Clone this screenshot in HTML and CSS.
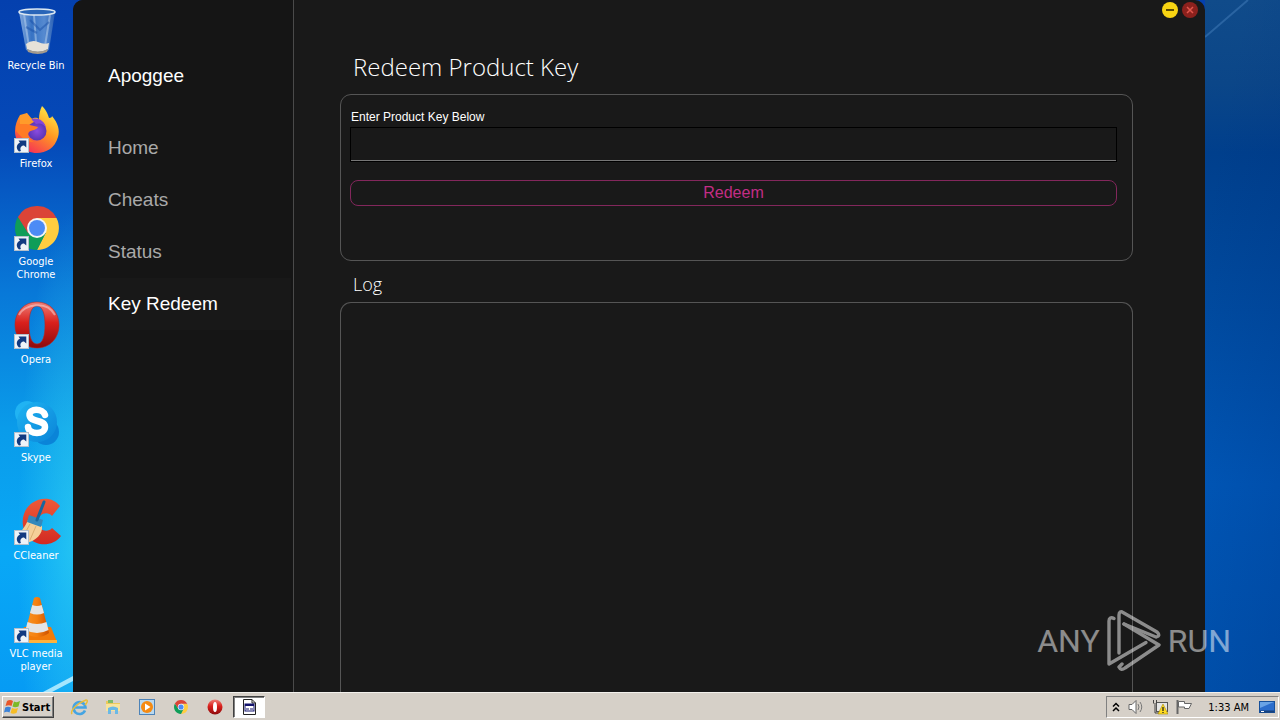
FILE: index.html
```html
<!DOCTYPE html>
<html lang="en">
<head>
<meta charset="utf-8">
<title>Apoggee</title>
<link rel="stylesheet" href="styles.css">
</head>
<body>
<svg class="defs" aria-hidden="true">
  <defs>
    <linearGradient id="glass" x1="0" x2="1"><stop offset="0" stop-color="#b8d4f0"/><stop offset=".35" stop-color="#4d88cc"/><stop offset=".7" stop-color="#79a9de"/><stop offset="1" stop-color="#3a6cb5"/></linearGradient>
    <linearGradient id="fox" x1=".8" y1="0" x2=".2" y2="1"><stop offset="0" stop-color="#fff04a"/><stop offset=".45" stop-color="#ff9a22"/><stop offset="1" stop-color="#f5245c"/></linearGradient>
    <radialGradient id="globe"><stop offset="0" stop-color="#8a4be0"/><stop offset="1" stop-color="#5a35b5"/></radialGradient>
    <linearGradient id="opera" x1="0" y1="0" x2="0" y2="1"><stop offset="0" stop-color="#ef8078"/><stop offset=".45" stop-color="#d9201c"/><stop offset="1" stop-color="#8c0a0c"/></linearGradient>
    <linearGradient id="skype" x1="0" y1="0" x2="1" y2="1"><stop offset="0" stop-color="#1fb4f2"/><stop offset="1" stop-color="#0a84d8"/></linearGradient>
    <linearGradient id="cc" x1="0" y1="0" x2="0" y2="1"><stop offset="0" stop-color="#ee5a38"/><stop offset="1" stop-color="#d22a22"/></linearGradient>
    <linearGradient id="cone" x1="0" x2="1"><stop offset="0" stop-color="#f79326"/><stop offset=".5" stop-color="#f5800f"/><stop offset="1" stop-color="#cc5200"/></linearGradient>
    <symbol id="arrow" viewBox="0 0 15 15"><rect x=".5" y=".5" width="14" height="14" fill="#eef3f8" stroke="#b4c0cc"/><path d="M5 13.500C1.500 10.500 2.500 6 6 4.800L4.500 2.500H12.300V9.500L10 7.500C7 7.500 5.500 10 7 13Z" fill="#123a80"/></symbol>
    <symbol id="chrome" viewBox="0 0 44 44"><path d="M22 12H41.500A22 22 0 0 1 22 44L30.500 27Z" fill="#ffcd40"/><path d="M2.950 11A22 22 0 0 0 22 44L30.700 27 13.300 27Z" fill="#0f9d58"/><path d="M2.950 11A22 22 0 0 1 41.500 12H22L13 27Z" fill="#db4437"/><circle cx="22" cy="22" r="10" fill="#f4f4f4"/><circle cx="22" cy="22" r="8" fill="#4c8bf5"/></symbol>
  </defs>
</svg>

<div class="desktop">
  <nav class="shortcuts" aria-label="Desktop">
    <a class="shortcut" href="#">
      <svg class="shortcut-icon" viewBox="0 0 48 48"><path d="M7 4 43 4 37 42Q27 48 14 42Z" fill="url(#glass)" fill-opacity=".7"/><path d="M12 6 17 39M22 7 24 34M38 7 33 38" stroke="#c9def2" stroke-opacity=".45" stroke-width="2"/><path d="M18 12 28 22 37 14M14 19 25 25" stroke="#1a50a8" stroke-opacity=".5" stroke-width="2" fill="none"/><path d="M14 36Q20 31 26 34T37 35L36 41Q26 47 15 41Z" fill="#e7e2d8"/><path d="M15 41Q26 46 36 41L35 44Q26 48 16 44Z" fill="#a39a8d"/><ellipse cx="25" cy="4" rx="18" ry="3" fill="#2965b8" stroke="#dce8f2" stroke-width="1.500"/></svg>
      <span>Recycle Bin</span>
    </a>
    <a class="shortcut" href="#">
      <svg class="shortcut-icon" viewBox="0 0 48 48"><path d="M30 0C35 5 36 9 37 12 39 12 40 11 40 10 46 17 48 24 46 31 43 42 34 47 25 47 12 47 3 37 3 25 3 19 5 14 8 9L9 14C11 11 13 9 15 7 15 10 17 12 20 13 23 11 25 12 27 13 27 8 28 4 30 0Z" fill="url(#fox)"/><circle cx="25" cy="25" r="9.500" fill="url(#globe)"/><path d="M19 13C25 11 33 14 34 22 31 17 27 17 24 18Z" fill="#8446d8"/><path d="M4 19C10 16 14 18 18 19L26 21C25 24 20 24 17 26 15 29 17 34 22 36 12 36 7 28 4 25Z" fill="#ff7b25"/><path d="M8 9 15 7 20 13 18 18 8 18Z" fill="#ff9b2a"/></svg>
      <svg class="shortcut-arrow"><use href="#arrow"/></svg>
      <span>Firefox</span>
    </a>
    <a class="shortcut" href="#">
      <svg class="shortcut-icon" viewBox="0 0 48 48"><use href="#chrome" x="3" y="2" width="44" height="44"/></svg>
      <svg class="shortcut-arrow"><use href="#arrow"/></svg>
      <span>Google Chrome</span>
    </a>
    <a class="shortcut" href="#">
      <svg class="shortcut-icon" viewBox="0 0 48 48"><path fill-rule="evenodd" d="M25 0C38 0 47 10 47 23S38 46 25 46 3 36 3 23 12 0 25 0ZM25 4C19 4 17 13 17 23S19 42 25 42 33 33 33 23 31 4 25 4Z" fill="url(#opera)" stroke="#b12825" stroke-width=".6"/><path d="M7 13C12 2 35-2 43 13" fill="none" stroke="#fff" stroke-opacity=".4" stroke-width="2"/></svg>
      <svg class="shortcut-arrow"><use href="#arrow"/></svg>
      <span>Opera</span>
    </a>
    <a class="shortcut" href="#">
      <svg class="shortcut-icon" viewBox="0 0 48 48"><circle cx="15" cy="13" r="12" fill="#20b3f3"/><circle cx="34" cy="32" r="13" fill="#0a84d8"/><circle cx="25" cy="22" r="20" fill="url(#skype)"/><path d="M33 15C31 8 17 8 17.500 15 18 23 33 19 33 27 33 35 17 35 16 27" fill="none" stroke="#fff" stroke-width="6.500" stroke-linecap="round"/></svg>
      <svg class="shortcut-arrow"><use href="#arrow"/></svg>
      <span>Skype</span>
    </a>
    <a class="shortcut" href="#">
      <svg class="shortcut-icon" viewBox="0 0 48 48"><path d="M48 8 40 18C36 13 26 15 26 24S36 35 40 30L49 38C41 49 25 48 18 41 7 30 9 13 20 5 30-2 42 0 48 8Z" fill="url(#cc)"/><path d="M16 22 30 28C31 36 24 43 14 45L2 38C9 35 13 29 16 22Z" fill="#f5cf98"/><path d="M18 26 11 39M24 28 18 42" stroke="#dcae70" stroke-width="1"/><path d="M17 17 31 22 29 29 15 24Z" fill="#3488bc"/><path d="M25 22 32 4" stroke="#17669d" stroke-width="3" stroke-linecap="round"/></svg>
      <svg class="shortcut-arrow"><use href="#arrow"/></svg>
      <span>CCleaner</span>
    </a>
    <a class="shortcut" href="#">
      <svg class="shortcut-icon" viewBox="0 0 48 48"><path d="M12 31H39L45 46H7Z" fill="#f27b0a"/><path d="M7 44H45V47H7Z" fill="#ffb23c"/><path d="M22 2Q25 0 28 2L37 37Q26 45 13 37Z" fill="url(#cone)"/><path d="M20.300 9Q25 11 29.700 9L32 17Q25 20 18 17ZM15.500 26Q25 30 34.500 26L36.500 34Q25 40 13.500 34Z" fill="#e4e4e4"/></svg>
      <svg class="shortcut-arrow"><use href="#arrow"/></svg>
      <span>VLC media player</span>
    </a>
  </nav>

  <div class="window">
    <aside class="sidebar">
      <h1 class="brand">Apoggee</h1>
      <nav class="menu">
        <a class="menu-item" href="#">Home</a>
        <a class="menu-item" href="#">Cheats</a>
        <a class="menu-item" href="#">Status</a>
        <a class="menu-item active" href="#">Key Redeem</a>
      </nav>
    </aside>
    <main class="content">
      <h2 class="title">Redeem Product Key</h2>
      <form class="panel redeem-form">
        <label class="field-label" for="key">Enter Product Key Below</label>
        <input class="key-input" id="key" type="text">
        <button class="redeem" type="button">Redeem</button>
      </form>
      <h3 class="log-title">Log</h3>
      <section class="panel log"></section>
    </main>
    <div class="window-controls">
      <button class="control minimize" type="button" aria-label="Minimize"><svg viewBox="0 0 16 16"><path d="M4 8H12" stroke="#5c4b00" stroke-width="2"/></svg></button>
      <button class="control close" type="button" aria-label="Close"><svg viewBox="0 0 16 16"><path d="M5 5 11 11M11 5 5 11" stroke="#e2564c" stroke-width="1.500"/></svg></button>
    </div>
  </div>
  <svg class="streak-right" viewBox="0 0 75 40"><path d="M0 37 43 0" stroke="#4b86c0" stroke-opacity=".45" stroke-width="2"/></svg>
  <svg class="streak-left" viewBox="0 0 30 16"><path d="M0 16 30 0V5L9 16Z" fill="#bdf0ff" fill-opacity=".85"/></svg>

  <div class="watermark">
    <span>ANY</span>
    <svg viewBox="0 0 54 62" fill="none" stroke="currentColor" stroke-width="3.400" stroke-linecap="round" stroke-linejoin="round"><path d="M7 8.500C4 7 2 8 2 11V54L39 32.500"/><path d="M12 43V5C12 2 14 1 16 2.500L50 22Q54 26 49 27L17 14"/><path d="M17 14 52 35 18 58Q14 61 12 57L15 54"/></svg>
    <span>RUN</span>
  </div>
</div>

<footer class="taskbar">
  <button class="start" type="button">
    <svg viewBox="0 0 17 16"><path d="M3 2Q6 0 9 2L7.500 7Q5 5.500 1.500 7Z" fill="#e8562a"/><path d="M10 2.500Q13 4 16 2L14.500 7.500Q11 9 8.500 7.500Z" fill="#7cb928"/><path d="M1.200 8.500Q4 7 7 8.500L5.500 13.500Q3 12 0 13.500Z" fill="#3c83d8"/><path d="M8 9Q11 10.500 14 9L12.500 14Q9 15.500 6.500 14Z" fill="#f7bd25"/></svg>
    Start
  </button>
  <div class="tasks">
    <button class="task" type="button" aria-label="Internet Explorer"><svg viewBox="0 0 18 18"><path d="M15 12.500A6 6 0 1 1 15.500 9.500H5" fill="none" stroke="#45a4e2" stroke-width="2.600"/><path d="M2 16C0 13 7 5 16 2 19 2 16 6 15 7" fill="none" stroke="#e9bd38" stroke-width="1.500"/></svg></button>
    <button class="task" type="button" aria-label="Explorer"><svg viewBox="0 0 18 18"><path d="M2 3H8L9 5H16V13H2Z" fill="#ecc95b"/><path d="M4 2H9V5H4Z" fill="#7dbb68"/><path d="M2 6H16V13H2Z" fill="#f8e49c"/><path d="M4 16V10Q9 7 14 10V16H11V12H7V16Z" fill="#6bb9e5"/></svg></button>
    <button class="task" type="button" aria-label="Media Player"><svg viewBox="0 0 18 18"><rect x="1.500" y="1.500" width="15" height="15" fill="#b9d8ef" stroke="#4d83b8"/><circle cx="9" cy="9" r="6" fill="#f58a12"/><path d="M7 5.500 12.500 9 7 12.500Z" fill="#fff"/></svg></button>
    <button class="task" type="button" aria-label="Chrome"><svg viewBox="0 0 18 18"><use href="#chrome" x="2" y="2" width="14" height="14"/></svg></button>
    <button class="task" type="button" aria-label="Opera"><svg viewBox="0 0 18 18"><circle cx="9" cy="9" r="7.500" fill="url(#opera)"/><ellipse cx="9" cy="9" rx="2" ry="5" fill="#fff"/></svg></button>
    <button class="task current" type="button" aria-label="Apoggee"><svg viewBox="0 0 18 18"><path d="M3.500 1.500H12L15.500 5V16.500H3.500Z" fill="#fff" stroke="#222"/><path d="M12 1.500V5H15.500" fill="none" stroke="#222"/><rect x="5" y="6" width="9" height="7" fill="#fff" stroke="#14146e"/><path d="M5 7H14" stroke="#14146e" stroke-width="2"/><path d="M7 10V12M11 10V12M8 11H9M12 11H13" stroke="#14146e"/></svg></button>
  </div>
  <div class="tray">
    <svg class="chevron" viewBox="0 0 8 10"><path d="M1 4.500 4 1.500 7 4.500M1 9 4 6 7 9" fill="none" stroke="#000" stroke-width="1.500"/></svg>
    <svg class="tray-icon" viewBox="0 0 16 16"><path d="M1 5.500H4L8 1.500V14.500L4 10.500H1Z" fill="#fff" stroke="#666"/><path d="M10 5Q12 8 10 11M12 3Q15.500 8 12 13" fill="none" stroke="#777"/></svg>
    <svg class="tray-icon" viewBox="0 0 16 16"><rect x="4.500" y="3.500" width="11" height="9" fill="#e5e5e5" stroke="#555"/><path d="M1.500 1V4Q3 7 4.500 4V1M3 6V14H8" fill="none" stroke="#444"/><path d="M11 5 16 15H6Z" fill="#ffdc22" stroke="#a88a00" stroke-width=".6"/><path d="M11 8V12M11 13V14" stroke="#222" stroke-width="1.300"/></svg>
    <svg class="tray-icon" viewBox="0 0 16 16"><path d="M1.500 1V15" stroke="#666" stroke-width="2"/><path d="M2.500 2.500H8.500V4.500H15.500L13 9.500H8.500V8H2.500Z" fill="#fff" stroke="#666"/></svg>
    <time class="clock">1:33 AM</time>
    <svg class="tray-icon" viewBox="0 0 16 16"><rect x=".5" y="2.500" width="15" height="11" fill="#2b6dcc" stroke="#16509b"/><path d="M1 3H15L1 9Z" fill="#69a3e6"/><path d="M1 12.500H15" stroke="#17417b" stroke-width="2"/><path d="M2 12.500H5" stroke="#fff"/></svg>
  </div>
</footer>
</body>
</html>
```

FILE: styles.css
```css
* {
  box-sizing: border-box;
}

body {
  margin: 0;
  height: 100vh;
  display: flex;
  flex-direction: column;
  overflow: hidden;
  font-family: "Liberation Sans", Arial, sans-serif;
}

button {
  font: inherit;
  padding: 0;
}

a {
  color: inherit;
  text-decoration: none;
}

.defs {
  position: absolute;
  width: 0;
  height: 0;
}

/* Desktop */
.desktop {
  position: relative;
  flex: 1;
  min-height: 0;
  display: flex;
  padding-right: 75px;
  background:
    linear-gradient(100deg, transparent 20%, rgba(0, 40, 120, 0.25)) right / 75px 100% no-repeat,
    linear-gradient(#104b8a, #0b4688 12%, #003f8c 22%, #004ba0 45%, #0058b8 70%, #0054b0) right / 75px 100% no-repeat,
    radial-gradient(ellipse 55px 330px at 73px 78%, rgba(60, 220, 240, 0.5), transparent) left / 73px 100% no-repeat,
    linear-gradient(#0440ae, #0549b8 20%, #0878d8 42%, #0a9cea 62%, #09a8f6 80%, #069bf4);
}

.shortcuts {
  width: 73px;
  flex: none;
  overflow: hidden;
}

.shortcut {
  position: relative;
  height: 98px;
  padding: 8px 7px 0 6px;
  display: flex;
  flex-direction: column;
  align-items: center;
  gap: 3px;
  color: #fff;
  font: 11px/13px "DejaVu Sans Condensed", "DejaVu Sans", sans-serif;
  text-align: center;
}

.shortcut-icon {
  width: 48px;
  height: 48px;
  flex: none;
  overflow: visible;
}

.shortcut-arrow {
  position: absolute;
  left: 14px;
  top: 40px;
  width: 15px;
  height: 15px;
}

.streak-right {
  position: absolute;
  top: 0;
  right: 0;
  width: 75px;
  height: 40px;
}

.streak-left {
  position: absolute;
  left: 43px;
  bottom: 0;
  width: 30px;
  height: 16px;
}

/* Application window */
.window {
  position: relative;
  flex: 1;
  min-width: 0;
  display: flex;
  overflow: hidden;
  border-radius: 10px 10px 0 0;
  background: #191919;
}

.window-controls {
  position: absolute;
  top: 2px;
  right: 7px;
  display: flex;
  gap: 4px;
}

.control {
  width: 16px;
  height: 16px;
  border: 0;
  border-radius: 50%;
}

.control svg {
  display: block;
}

.minimize {
  background: #f8d412;
}

.close {
  background: #8c211d;
}

.sidebar {
  width: 221px;
  flex: none;
  padding: 64px 2px 0 27px;
  border-right: 1px solid #4a4a4a;
  background: #151515;
  font-size: 19px;
}

.brand {
  margin: 0 0 34px;
  padding-left: 8px;
  color: #fff;
  font-size: 19px;
  line-height: 24px;
  font-weight: 400;
}

.menu-item {
  display: block;
  padding-left: 8px;
  color: #a9a9a9;
  line-height: 52px;
}

.menu-item.active {
  color: #fff;
  background: #181818;
}

.content {
  flex: 1;
  min-width: 0;
  display: flex;
  flex-direction: column;
  padding: 52px 72px 0 46px;
  color: #fff;
}

.title,
.log-title {
  margin: 0;
  padding-left: 13px;
  font-family: "Open Sans", "Noto Sans", sans-serif;
  font-weight: 300;
}

.title {
  padding-bottom: 12px;
  font-size: 24px;
  line-height: 30px;
}

.log-title {
  padding: 11px 0 6px 13px;
  font-size: 18px;
  line-height: 24px;
}

.panel {
  border: 1px solid #555;
  border-radius: 11px;
}

.redeem-form {
  display: flex;
  flex-direction: column;
  padding: 14px 15px 54px 9px;
}

.field-label {
  padding: 0 0 2px 1px;
  font-size: 12px;
  line-height: 16px;
}

.key-input {
  height: 35px;
  padding: 0 8px;
  border: 1px solid #000;
  border-radius: 0;
  outline: 0;
  color: #fff;
  background: #191919;
  box-shadow: inset 0 -1px #777;
}

.redeem {
  height: 26px;
  margin-top: 18px;
  border: 1px solid #83275c;
  border-radius: 8px;
  color: #c32d85;
  background: #191919;
  font-size: 16px;
  line-height: 24px;
}

.log {
  flex: 1;
  border-bottom: 0;
  border-radius: 11px 11px 0 0;
}

.watermark {
  position: absolute;
  right: 49px;
  bottom: 20px;
  display: flex;
  align-items: center;
  gap: 7px;
  color: #fff;
  opacity: 0.5;
  font: 32px/62px Roboto, "Liberation Sans", sans-serif;
  pointer-events: none;
}

.watermark svg {
  width: 54px;
  height: 62px;
}

/* Taskbar */
.taskbar {
  height: 28px;
  flex: none;
  display: flex;
  align-items: center;
  padding: 2px 1px 1px 2px;
  border-top: 1px solid #f2f0ec;
  background: #d6d0c8;
}

.start {
  display: flex;
  align-items: center;
  gap: 1px;
  width: 52px;
  height: 22px;
  padding-left: 1px;
  border: 1px solid;
  border-color: #fff #404040 #404040 #fff;
  box-shadow: inset -1px -1px #808080;
  color: #000;
  background: #d6d0c8;
  font: bold 11px "DejaVu Sans Condensed", "DejaVu Sans", sans-serif;
}

.start svg {
  width: 17px;
  height: 16px;
}

.tasks {
  display: flex;
  flex: 1;
  gap: 2px;
  padding-left: 9px;
}

.task {
  width: 32px;
  height: 22px;
  display: flex;
  align-items: center;
  justify-content: center;
  border: 1px solid transparent;
  background: transparent;
}

.task svg {
  width: 18px;
  height: 18px;
}

.task.current {
  border-color: #404040 #fff #fff #404040;
  box-shadow: inset 1px 1px #808080;
  background: #fff;
}

.tray {
  display: flex;
  align-items: center;
  gap: 8px;
  height: 22px;
  padding: 0 3px 0 5px;
  border: 1px solid;
  border-color: #808080 #fff #fff #808080;
  color: #000;
  font: 11px "DejaVu Sans Condensed", "DejaVu Sans", sans-serif;
}

.tray-icon {
  width: 16px;
  height: 16px;
}

.chevron {
  width: 8px;
  height: 10px;
}

.clock {
  padding: 0 2px 0 8px;
}
```
